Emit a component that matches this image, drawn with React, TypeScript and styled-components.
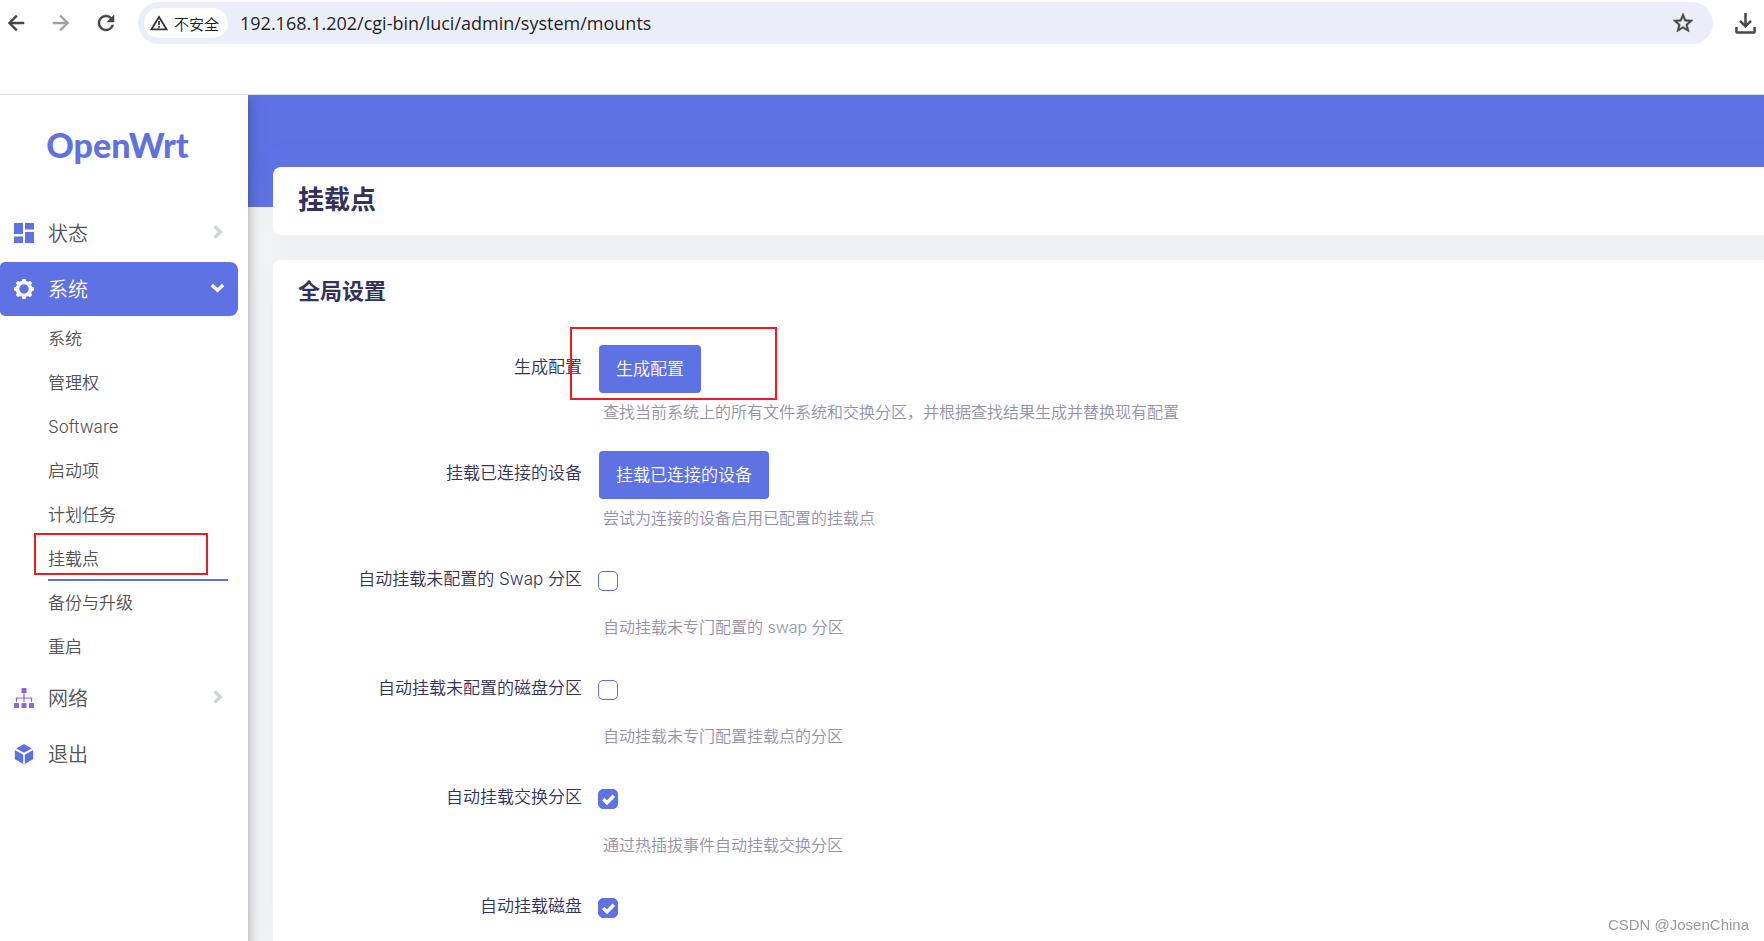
import React from "react";
import styled, { createGlobalStyle } from "styled-components";
import { MdArrowBack, MdArrowForward, MdRefresh, MdStarBorder } from "react-icons/md";

const primary = "#5e72e4";
const heading = "#32325d";
const mark = "#ed1c24";

const GlobalStyle = createGlobalStyle`
  *, *::before, *::after { box-sizing: border-box; }
  body {
    margin: 0;
    background: #f4f5f7;
    font-family: Inter, "Noto Sans CJK SC", sans-serif;
    font-weight: 350;
  }
  button, input { font-family: inherit; font-weight: inherit; }
`;

const Page = styled.div`
  display: flex;
  flex-direction: column;
  min-height: 100vh;
  overflow: hidden;
`;

/* Browser bar */

const BrowserBar = styled.header`
  position: relative;
  z-index: 2;
  display: flex;
  align-items: flex-start;
  height: 95px;
  padding: 2px 8px 0 4px;
  background: #fff;
  border-bottom: 1px solid #dedede;
`;

const BarRow = styled.div`
  display: flex;
  flex: 1;
  align-items: center;
  height: 42px;
`;

const BarButton = styled.button<{ $muted?: boolean }>`
  display: flex;
  padding: 0;
  border: 0;
  background: none;
  color: ${(p) => (p.$muted ? "#a3a3a3" : "#474747")};
`;

const HistoryButtons = styled.div`
  display: flex;
  gap: 21px;
  margin-right: 20px;

  path:not([fill="none"]) { stroke: currentColor; stroke-width: 0.5px; }
`;

const AddressBox = styled.div`
  display: flex;
  flex: 1;
  align-items: center;
  height: 42px;
  margin-right: 22px;
  padding: 0 18px 0 6px;
  border-radius: 21px;
  background: #ebeef8;

  > button:last-child path:not([fill="none"]) { stroke: currentColor; stroke-width: 0.5px; }
`;

const SecurityChip = styled.button`
  display: flex;
  align-items: center;
  gap: 6px;
  height: 30px;
  padding: 0 9px 0 6px;
  border: 0;
  border-radius: 15px;
  background: #fff;
  color: #202020;
  font-size: 15px;
  white-space: nowrap;
`;

const AddressInput = styled.input`
  flex: 1;
  margin-left: 12px;
  padding: 0;
  border: 0;
  background: none;
  color: #1f1f1f;
  font-family: "Open Sans", sans-serif;
  font-size: 18px;
  font-weight: 400;
  line-height: 24px;
  outline: 0;
`;

/* Sidebar */

const Body = styled.div`
  display: flex;
  flex: 1;
`;

const Sidebar = styled.aside`
  position: relative;
  z-index: 1;
  flex: 0 0 248px;
  margin-bottom: -24px;
  background: #fff;
  box-shadow: 0 0 15px -3px rgba(0, 0, 0, 0.5);
`;

const Brand = styled.a`
  display: block;
  width: 235px;
  margin-bottom: 11px;
  color: ${primary};
  font-family: Lato, sans-serif;
  font-size: 34px;
  font-weight: 900;
  line-height: 100px;
  text-align: center;
  text-decoration: none;
`;

const Menu = styled.ul`
  display: flex;
  flex-direction: column;
  gap: 2px;
  margin: 0;
  padding: 0 10px 0 0;
  list-style: none;
`;

const MenuLink = styled.a<{ $active?: boolean }>`
  display: flex;
  align-items: center;
  gap: 14px;
  height: 54px;
  padding: 0 14px;
  border-radius: 5px 8px 8px 5px;
  background: ${(p) => (p.$active ? primary : "transparent")};
  color: ${(p) => (p.$active ? "#fff" : "#525252")};
  font-size: 20px;
  text-decoration: none;
`;

const MenuText = styled.span`
  flex: 1;
  padding-bottom: 2px;
`;

const Chevron = styled.svg`
  margin-bottom: 3px;
`;

const Submenu = styled.ul`
  margin: 0;
  padding: 1px 10px 0 48px;
  list-style: none;
`;

const SubmenuItem = styled.li`
  position: relative;
`;

const SubmenuLink = styled.a<{ $active?: boolean }>`
  display: block;
  height: 44px;
  border-bottom: 2px solid ${(p) => (p.$active ? primary : "transparent")};
  color: #525252;
  font-size: 17px;
  line-height: 44px;
  text-decoration: none;
`;

const MenuMark = styled.div`
  position: absolute;
  top: -4px;
  left: -14px;
  width: 174px;
  height: 42px;
  border: 2px solid ${mark};
  pointer-events: none;
`;

/* Content */

const Main = styled.main`
  display: flex;
  flex: 1;
  flex-direction: column;
  gap: 25px;
  min-width: 0;
  padding: 72px 0 0 25px;
  background: linear-gradient(${primary} 112px, #f4f5f7 112px);
`;

const Card = styled.section<{ $fill?: boolean }>`
  flex: ${(p) => (p.$fill ? 1 : "none")};
  margin-right: -32px;
  padding: 0 25px;
  border-radius: ${(p) => (p.$fill ? "8px 8px 0 0" : "8px")};
  background: #fff;
  box-shadow: 0 0 32px rgba(136, 152, 170, 0.1);
`;

const PageTitle = styled.h2`
  margin: 0;
  color: ${heading};
  font-size: 26px;
  font-weight: 700;
  line-height: 66px;
  padding-bottom: 2px;
`;

const SectionTitle = styled.h3`
  margin: 0 0 23px;
  color: ${heading};
  font-size: 22px;
  font-weight: 700;
  line-height: 62px;
`;

const Form = styled.form`
  display: flex;
  flex-direction: column;
  gap: 27px;
`;

const Row = styled.div`
  display: grid;
  grid-template-columns: 284px 1fr;
  column-gap: 17px;
`;

const RowLabel = styled.label`
  color: ${heading};
  font-size: 17px;
  line-height: 44px;
  text-align: right;
`;

const Field = styled.div`
  position: relative;
`;

const ControlLine = styled.div`
  display: flex;
  align-items: center;
  height: 48px;
`;

const ActionButton = styled.button`
  height: 48px;
  padding: 0 17px 4px;
  border: 0;
  border-radius: 4px;
  background: ${primary};
  color: #fff;
  font-size: 17px;
`;

const Hint = styled.p<{ $gap: number }>`
  margin: ${(p) => p.$gap}px 0 0 4px;
  color: #9391ab;
  font-size: 16px;
  line-height: 24px;
`;

const FieldMark = styled.div`
  position: absolute;
  top: -18px;
  left: -29px;
  width: 207px;
  height: 73px;
  border: 2px solid ${mark};
  pointer-events: none;
`;

const CheckboxBox = styled.span`
  display: grid;
  width: 20px;
  height: 20px;
  margin-left: -1px;

  > * { grid-area: 1 / 1; }
  svg { pointer-events: none; visibility: hidden; }
  input:checked + svg { visibility: visible; }
`;

const CheckboxInput = styled.input`
  appearance: none;
  width: 20px;
  height: 20px;
  margin: 0;
  border: 1px solid ${primary};
  border-radius: 5px;
  background: #fff;

  &:checked { background: ${primary}; }
`;

const Watermark = styled.div`
  position: fixed;
  right: 15px;
  bottom: 6px;
  z-index: 3;
  color: #999;
  font-family: "Liberation Sans", sans-serif;
  font-size: 15px;
  font-weight: 400;
  line-height: 20px;
`;

/* Icons */

const WarningIcon = () => (
  <svg width="18" height="16" viewBox="0 0 18 16" aria-hidden="true">
    <path d="M9 2 L16.6 14.4 H1.4 Z" fill="none" stroke="#303030" strokeWidth="1.8" />
    <path d="M9 6 V10 M9 11 V12.8" stroke="#303030" strokeWidth="1.7" />
  </svg>
);

const DownloadIcon = () => (
  <svg width="21" height="21" viewBox="0 0 21 21" fill="none" stroke="#474747" strokeWidth="2.5" aria-hidden="true">
    <path d="M10.5 0 V13.5 M5 7.8 L10.5 13.3 L16 7.8" />
    <path d="M1.4 14 V18.2 Q1.4 19.5 2.7 19.5 H18.3 Q19.6 19.5 19.6 18.2 V14" />
  </svg>
);

const DashboardIcon = () => (
  <svg width="20" height="20" viewBox="0 0 20 20" fill={primary} aria-hidden="true">
    <path d="M0 0H9V11H0Z M0 13.5H9V20H0Z M11 0H20V6.5H11Z M11 9H20V20H11Z" />
  </svg>
);

const GearIcon = () => (
  <svg width="20" height="20" viewBox="0 0 20 20" aria-hidden="true">
    <circle cx="10" cy="10" r="6.5" fill="none" stroke="#fff" strokeWidth="3.6" />
    {[0, 45, 90, 135, 180, 225, 270, 315].map((angle) => (
      <path key={angle} d="M7.8 2.6 L8.4 0 H11.6 L12.2 2.6 Z" fill="#fff" transform={`rotate(${angle} 10 10)`} />
    ))}
  </svg>
);

const NetworkIcon = () => (
  <svg width="20" height="20" viewBox="0 0 20 20" fill="#8965e0" aria-hidden="true">
    <path d="M7.5 0H12.5V5H7.5Z M0 15H5V20H0Z M7.5 15H12.5V20H7.5Z M15 15H20V20H15Z" />
    <path d="M10 5V14 M2.5 14V10H17.5V14" fill="none" stroke="#8965e0" strokeWidth="1.2" />
  </svg>
);

const CubeIcon = () => (
  <svg width="20" height="20" viewBox="0 0 20 20" fill={primary} aria-hidden="true">
    <path d="M10 0 L17.8 4.4 L10 8.8 L2.2 4.4 Z" />
    <path d="M0.8 6 L9.2 10.7 V20 L1.4 15.6 Q0.8 15.2 0.8 14.6 Z" />
    <path d="M19.2 6 L10.8 10.7 V20 L18.6 15.6 Q19.2 15.2 19.2 14.6 Z" />
  </svg>
);

const ChevronIcon = ({ open }: { open?: boolean }) => (
  <Chevron width="14" height="14" viewBox="0 0 14 14" fill="none" strokeWidth="3.4" stroke={open ? "#fff" : "#ced4da"} aria-hidden="true">
    <path d={open ? "M1.8 4 L7.5 9.2 L13.2 4" : "M4.6 1.4 L10.2 7 L4.6 12.6"} />
  </Chevron>
);

/* Data */

const systemPages = ["系统", "管理权", "Software", "启动项", "计划任务", "挂载点", "备份与升级", "重启"];

const actions = [
  { id: "generate", label: "生成配置", hint: "查找当前系统上的所有文件系统和交换分区，并根据查找结果生成并替换现有配置", marked: true },
  { id: "mount", label: "挂载已连接的设备", hint: "尝试为连接的设备启用已配置的挂载点", marked: false },
];

const toggles = [
  { id: "anon-swap", label: "自动挂载未配置的 Swap 分区", hint: "自动挂载未专门配置的 swap 分区", on: false },
  { id: "anon-mount", label: "自动挂载未配置的磁盘分区", hint: "自动挂载未专门配置挂载点的分区", on: false },
  { id: "auto-swap", label: "自动挂载交换分区", hint: "通过热插拔事件自动挂载交换分区", on: true },
  { id: "auto-mount", label: "自动挂载磁盘", hint: "", on: true },
];

const Checkbox = ({ id, checked }: { id: string; checked: boolean }) => (
  <CheckboxBox>
    <CheckboxInput type="checkbox" id={id} defaultChecked={checked} />
    <svg width="20" height="20" viewBox="0 0 20 20" aria-hidden="true">
      <path d="M5.2 10 L9 13.8 L15.8 6.8" fill="none" stroke="#fff" strokeWidth="3.4" />
    </svg>
  </CheckboxBox>
);

export default function App() {
  return (
    <Page>
      <GlobalStyle />
      <BrowserBar>
        <BarRow>
          <HistoryButtons>
            <BarButton aria-label="后退"><MdArrowBack size={24} /></BarButton>
            <BarButton aria-label="前进" $muted><MdArrowForward size={24} /></BarButton>
            <BarButton aria-label="刷新"><MdRefresh size={24} /></BarButton>
          </HistoryButtons>
          <AddressBox>
            <SecurityChip><WarningIcon />不安全</SecurityChip>
            <AddressInput aria-label="地址" defaultValue="192.168.1.202/cgi-bin/luci/admin/system/mounts" />
            <BarButton aria-label="收藏"><MdStarBorder size={24} /></BarButton>
          </AddressBox>
          <BarButton aria-label="下载"><DownloadIcon /></BarButton>
        </BarRow>
      </BrowserBar>
      <Body>
        <Sidebar>
          <Brand href="#">OpenWrt</Brand>
          <nav>
            <Menu>
              <li>
                <MenuLink href="#"><DashboardIcon /><MenuText>状态</MenuText><ChevronIcon /></MenuLink>
              </li>
              <li>
                <MenuLink href="#" $active><GearIcon /><MenuText>系统</MenuText><ChevronIcon open /></MenuLink>
                <Submenu>
                  {systemPages.map((name) => (
                    <SubmenuItem key={name}>
                      <SubmenuLink href="#" $active={name === "挂载点"}>{name}</SubmenuLink>
                      {name === "挂载点" && <MenuMark />}
                    </SubmenuItem>
                  ))}
                </Submenu>
              </li>
              <li>
                <MenuLink href="#"><NetworkIcon /><MenuText>网络</MenuText><ChevronIcon /></MenuLink>
              </li>
              <li>
                <MenuLink href="#"><CubeIcon /><MenuText>退出</MenuText></MenuLink>
              </li>
            </Menu>
          </nav>
        </Sidebar>
        <Main>
          <Card>
            <PageTitle>挂载点</PageTitle>
          </Card>
          <Card $fill>
            <SectionTitle>全局设置</SectionTitle>
            <Form>
              {actions.map((a) => (
                <Row key={a.id}>
                  <RowLabel htmlFor={a.id}>{a.label}</RowLabel>
                  <Field>
                    <ControlLine><ActionButton id={a.id} type="button">{a.label}</ActionButton></ControlLine>
                    <Hint $gap={7}>{a.hint}</Hint>
                    {a.marked && <FieldMark />}
                  </Field>
                </Row>
              ))}
              {toggles.map((t) => (
                <Row key={t.id}>
                  <RowLabel htmlFor={t.id}>{t.label}</RowLabel>
                  <Field>
                    <ControlLine><Checkbox id={t.id} checked={t.on} /></ControlLine>
                    {t.hint && <Hint $gap={10}>{t.hint}</Hint>}
                  </Field>
                </Row>
              ))}
            </Form>
          </Card>
        </Main>
      </Body>
      <Watermark>CSDN @JosenChina</Watermark>
    </Page>
  );
}
